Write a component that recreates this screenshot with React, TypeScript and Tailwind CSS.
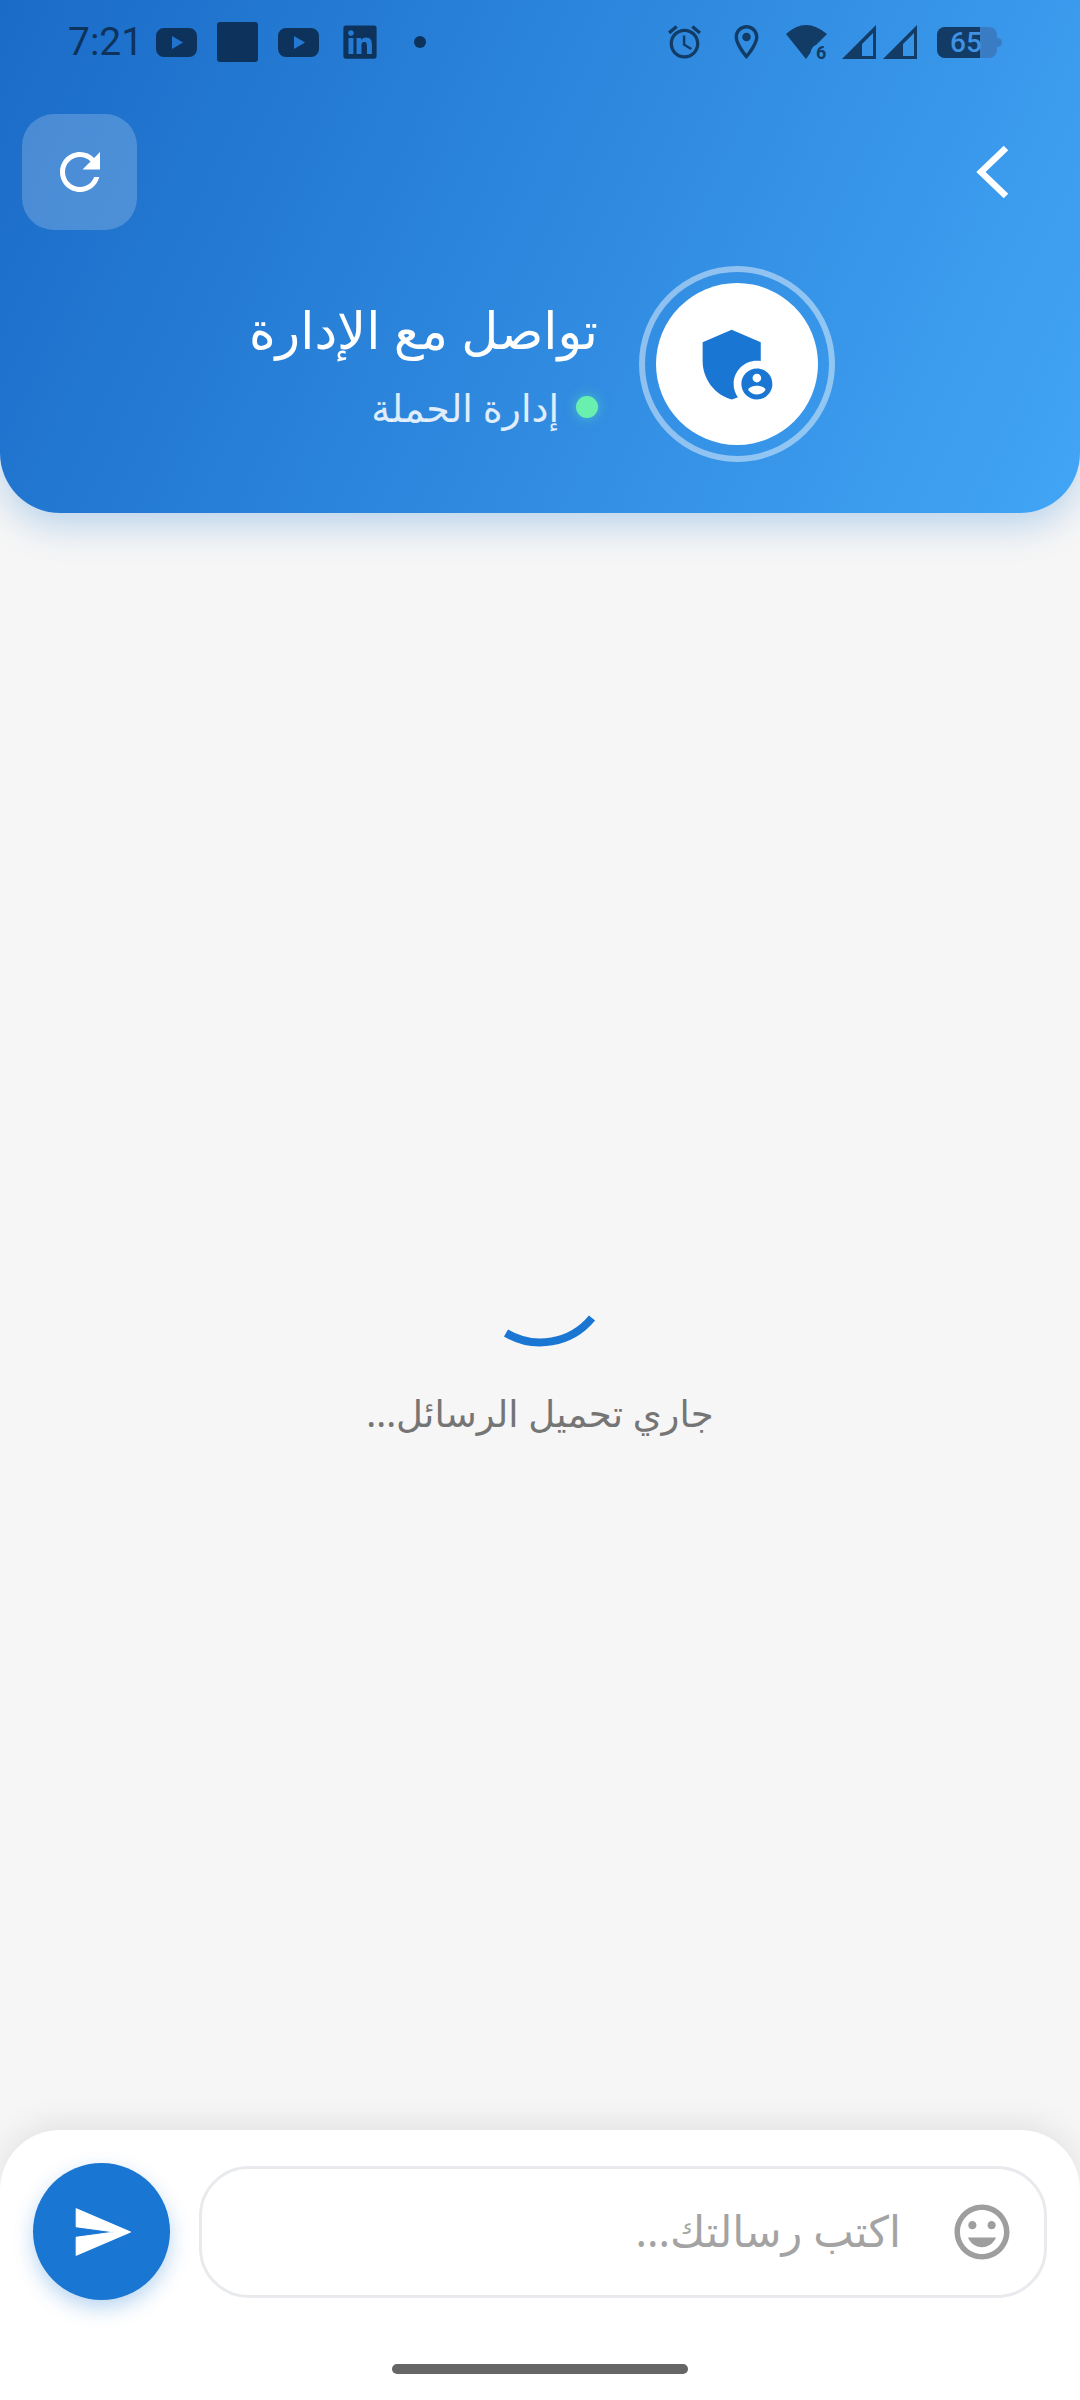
import React from 'react';
import { FaLinkedin } from 'react-icons/fa';

const arabicFont = "font-['Noto_Sans','DejaVu_Sans',sans-serif]";

function YoutubeIcon() {
  return (
    <svg viewBox="0 0 41 29" className="w-[41px] h-[29px] fill-current">
      <path
        fillRule="evenodd"
        d="M8 0h25a8 8 0 0 1 8 8v13a8 8 0 0 1-8 8H8a8 8 0 0 1-8-8V8a8 8 0 0 1 8-8zM16 8v13l11-6.500z"
      />
    </svg>
  );
}

function SignalIcon() {
  return (
    <svg viewBox="0 0 34 34" className="w-[34px] h-[34px] fill-current">
      <path fillRule="evenodd" d="M34 0v34H0zM31 8L20 19v12h11z" />
    </svg>
  );
}

function StatusBar() {
  return (
    <div className="flex items-center justify-between h-[84px] pl-[68px] pr-[78px] text-[#0d335d]">
      <div className="flex items-center">
        <span className="font-['Roboto',sans-serif] text-[39px] leading-none w-[72px]">7:21</span>
        <div className="ml-4">
          <YoutubeIcon />
        </div>
        <div className="ml-5 w-[41px] h-10 rounded-[3px] bg-[#0d335d]" />
        <div className="ml-5">
          <YoutubeIcon />
        </div>
        <FaLinkedin className="ml-[22px] w-[38px] h-[38px]" />
        <div className="ml-[35px] w-3 h-3 rounded-full bg-[#0d335d]" />
      </div>
      <div className="flex items-center text-[#123b66]">
        <svg viewBox="2 2 20 20" className="w-[33px] h-[34px] fill-current">
          <path d="M22 5.720l-4.600-3.860-1.290 1.530 4.600 3.860L22 5.720zM7.880 3.390L6.600 1.860 2 5.710l1.290 1.530 4.590-3.850zM12.500 8H11v6l4.750 2.850.75-1.230-4-2.370V8zM12 4c-4.970 0-9 4.030-9 9s4.020 9 9 9c4.970 0 9-4.030 9-9s-4.030-9-9-9zm0 16c-3.870 0-7-3.130-7-7s3.130-7 7-7 7 3.130 7 7-3.130 7-7 7z" />
        </svg>
        <svg viewBox="5 2 14 20" className="ml-[33px] w-[25px] h-[34px] fill-current">
          <path d="M12 2C8.130 2 5 5.130 5 9c0 5.250 7 13 7 13s7-7.750 7-13c0-3.870-3.130-7-7-7zM7 9c0-2.760 2.240-5 5-5s5 2.240 5 5c0 2.880-2.880 7.190-5 9.880C9.920 16.210 7 11.850 7 9z" />
          <circle cx="12" cy="9" r="2.500" />
        </svg>
        <svg viewBox="0 0 41 34" className="ml-[27px] w-[41px] h-[34px] fill-current overflow-visible">
          <path d="M0 9Q10 0 20 0T41 9L30 20Q26 21 24.500 27.500L20 34z" />
          <text x="30" y="34" fontSize="18" fontWeight="700" fontFamily="Roboto, sans-serif">
            6
          </text>
        </svg>
        <div className="ml-[15px]">
          <SignalIcon />
        </div>
        <div className="ml-[7px]">
          <SignalIcon />
        </div>
        <div className="ml-5 flex items-center">
          <div className="relative flex h-[31px] w-[60px] rounded-[8px] bg-[#3a7cc4]">
            <div className="w-[43px] rounded-l-[8px] bg-[#123b66]" />
            <span className="absolute inset-y-0 left-[13px] font-['Roboto',sans-serif] font-medium text-[28px] leading-[31px] text-[#3f92e2]">
              65
            </span>
          </div>
          <div className="w-[5px] h-[9px] rounded-r-full bg-[#3a7cc4]" />
        </div>
      </div>
    </div>
  );
}

function Header() {
  return (
    <header className="relative z-10 h-[513px] rounded-b-[60px] bg-linear-[115deg] from-[#1a6bc7] to-[#42a5f5] shadow-[0_12px_36px_rgba(25,118,210,0.28)]">
      <StatusBar />

      {/* Toolbar */}
      <div className="flex items-center justify-between mt-[30px] pl-[22px] pr-[72px]">
        <button className="flex items-center justify-center w-[115px] h-[116px] rounded-[32px] bg-white/20">
          <svg viewBox="0 0 24 24" className="w-[60px] h-[60px] fill-white">
            <path d="M17.650 6.350C16.200 4.900 14.210 4 12 4c-4.420 0-7.990 3.580-7.990 8s3.570 8 7.990 8c3.730 0 6.840-2.550 7.730-6h-2.080c-.82 2.330-3.040 4-5.650 4-3.310 0-6-2.690-6-6s2.690-6 6-6c1.660 0 3.140.69 4.220 1.780L13 11h7V4l-2.350 2.350z" />
          </svg>
        </button>
        <svg viewBox="0 0 32 54" className="w-8 h-[54px] fill-none stroke-white stroke-[6.5]">
          <polyline points="30,3 5,27 30,51" />
        </svg>
      </div>

      {/* Contact info */}
      <div className="flex items-center justify-end gap-[41px] mt-9 pr-[245px]" dir="ltr">
        <div className={`flex flex-col items-end text-white ${arabicFont}`}>
          <h1 className="text-[51px] leading-[60px] font-medium whitespace-nowrap" dir="rtl">
            تواصل مع الإدارة
          </h1>
          <div className="flex items-center gap-[17px] mt-[26px]">
            <span className="text-[38px] leading-[44px] text-white/85" dir="rtl">
              إدارة الحملة
            </span>
            <span className="w-[22px] h-[22px] rounded-full bg-[#69f0ae] shadow-[0_0_12px_rgba(105,240,174,0.5)]" />
          </div>
        </div>
        <div className="flex items-center justify-center w-[196px] h-[196px] rounded-full border-[6px] border-white/45">
          <div className="flex items-center justify-center w-[162px] h-[162px] rounded-full bg-white">
            <svg viewBox="0 0 24 24" className="w-[93px] h-[93px] fill-[#1976d2]">
              <path d="M17 11c.34 0 .67.04 1 .09V6.270L10.500 3 3 6.270v4.910c0 4.540 3.200 8.790 7.500 9.820.55-.13 1.080-.32 1.600-.55-.69-.98-1.100-2.170-1.100-3.450 0-3.310 2.690-6 6-6z" />
              <path d="M17 13c-2.210 0-4 1.790-4 4s1.790 4 4 4 4-1.790 4-4-1.790-4-4-4zm0 1.380c.62 0 1.120.51 1.120 1.120s-.51 1.120-1.120 1.120-1.120-.51-1.120-1.120.5-1.120 1.120-1.120zm0 5.370c-.93 0-1.740-.46-2.240-1.170.05-.72 1.510-1.080 2.240-1.080s2.190.36 2.240 1.080c-.5.71-1.310 1.170-2.240 1.170z" />
            </svg>
          </div>
        </div>
      </div>
    </header>
  );
}

function Composer() {
  return (
    <footer className="relative z-10 h-[270px] rounded-t-[60px] bg-white shadow-[0_-8px_30px_rgba(0,0,0,0.08)] pt-[33px] px-[33px]">
      <div className="flex items-center gap-[29px]">
        <button className="flex-shrink-0 flex items-center justify-center w-[137px] h-[137px] rounded-full bg-[#1976d2] shadow-[0_8px_20px_rgba(25,118,210,0.3)]">
          <svg viewBox="0 0 24 24" className="w-[62px] h-[62px] fill-white stroke-white stroke-[0.4] [stroke-linejoin:round]">
            <path d="M2.010 21L23 12 2.010 3 2 10l15 2-15 2z" />
          </svg>
        </button>
        <div className="flex-1 flex items-center h-[132px] rounded-[50px] border-[3px] border-[#e8eaed] pr-[29px] pl-8" dir="rtl">
          <svg viewBox="0 0 24 24" className="flex-shrink-0 w-[66px] h-[66px] fill-[#9e9e9e]">
            <path d="M11.990 2C6.470 2 2 6.480 2 12s4.470 10 9.990 10C17.520 22 22 17.520 22 12S17.520 2 11.990 2zM12 20c-4.420 0-8-3.580-8-8s3.580-8 8-8 8 3.580 8 8-3.580 8-8 8zm3.500-9c.83 0 1.500-.67 1.500-1.500S16.330 8 15.500 8 14 8.670 14 9.500s.67 1.500 1.500 1.500zm-7 0c.83 0 1.500-.67 1.500-1.500S9.330 8 8.500 8 7 8.670 7 9.500 7.670 11 8.500 11zm3.500 6.500c2.330 0 4.310-1.460 5.110-3.500H6.890c.8 2.040 2.780 3.500 5.110 3.500z" />
          </svg>
          <input
            className={`flex-1 min-w-0 mr-12 bg-transparent outline-none text-[43px] placeholder:text-[#a3a3a3] ${arabicFont}`}
            placeholder="اكتب رسالتك..."
          />
        </div>
      </div>
      <div className="mx-auto mt-16 w-[296px] h-[10px] rounded-full bg-[#666666]" />
    </footer>
  );
}

export default function App() {
  return (
    <div className="flex flex-col w-[1080px] h-[2400px] overflow-hidden bg-[#f6f6f6]">
      <Header />
      <main className="flex-1 flex flex-col items-center justify-center">
        <svg viewBox="0 0 140 140" className="w-[140px] h-[140px] fill-none stroke-[#1976d2] stroke-[8] overflow-visible">
          <path d="M36 128A67 67 0 0 0 122 113" />
        </svg>
        <p className={`mt-[43px] text-[37px] leading-[50px] text-[#757575] ${arabicFont}`} dir="rtl">
          جاري تحميل الرسائل...
        </p>
      </main>
      <Composer />
    </div>
  );
}
